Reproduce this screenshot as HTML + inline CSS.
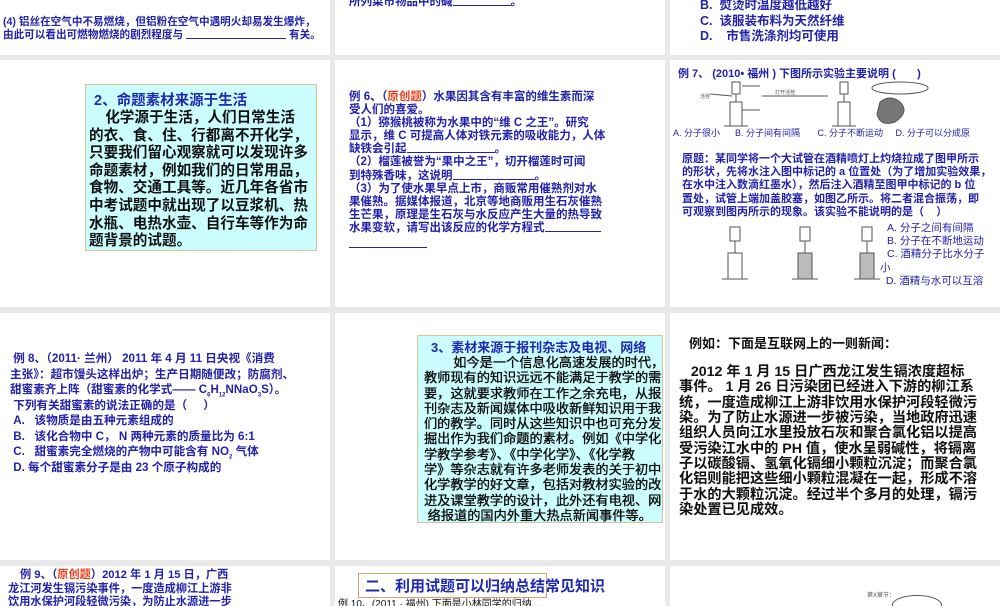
<!DOCTYPE html>
<html><head><meta charset="utf-8"><style>
*{margin:0;padding:0;box-sizing:border-box}
body{width:1000px;height:600px;background:#e9e9e9;position:relative;overflow:hidden;font-family:"Liberation Sans","Noto Sans CJK SC",sans-serif}
.s{position:absolute;background:#fff;overflow:hidden}
.t{position:absolute;white-space:nowrap;font-weight:bold}
.b{color:#2222aa}
.k{color:#111}
.r{color:#e8401c}
.u{display:inline-block;height:1px;background:#2222aa;vertical-align:-1px}
sub{line-height:0;font-size:6px}
</style></head><body>
<!-- row 1 -->
<div class="s" style="left:0;top:0;width:330px;height:55px">
 <div class="t" style="left:75px;top:-4px;font-size:6px;color:#888;font-weight:normal">A&nbsp;&nbsp;&nbsp;&nbsp;&nbsp;&nbsp;&nbsp;&nbsp;&nbsp;&nbsp;&nbsp;&nbsp;&nbsp;&nbsp;&nbsp;&nbsp;&nbsp;B&nbsp;&nbsp;&nbsp;&nbsp;&nbsp;&nbsp;&nbsp;&nbsp;&nbsp;&nbsp;&nbsp;&nbsp;&nbsp;&nbsp;&nbsp;&nbsp;&nbsp;C&nbsp;&nbsp;&nbsp;&nbsp;&nbsp;&nbsp;&nbsp;&nbsp;&nbsp;&nbsp;&nbsp;&nbsp;&nbsp;&nbsp;&nbsp;&nbsp;&nbsp;D</div>
 <div class="t b" style="left:3px;top:16px;font-size:10.6px;line-height:13px">(4) 铝丝在空气中不易燃烧，但铝粉在空气中遇明火却易发生爆炸，<br>由此可以看出可燃物燃烧的剧烈程度与 <span class="u" style="width:100px"></span> 有关。</div>
</div>
<div class="s" style="left:335px;top:0;width:330px;height:55px">
 <div class="t b" style="left:14px;top:-7px;font-size:11.5px">所列菜市物品中的碱<span class="u" style="width:58px"></span>。</div>
</div>
<div class="s" style="left:670px;top:0;width:330px;height:55px">
 <div class="t b" style="left:30px;top:-2px;font-size:12.5px;line-height:15.5px">B.&nbsp; 熨烫时温度越低越好<br>C.&nbsp; 该服装布料为天然纤维<br>D.&nbsp;&nbsp;&nbsp; 市售洗涤剂均可使用</div>
</div>
<!-- row 2 -->
<div class="s" style="left:0;top:60px;width:330px;height:247px">
 <div style="position:absolute;left:85px;top:24px;width:232px;height:167px;background:#ccfdfe;border:1px solid #d8c49a"></div>
 <div class="t" style="left:94px;top:29px;font-size:14.5px;color:#1f2ab0">2、命题素材来源于生活</div>
 <div class="t k" style="left:89px;top:50px;font-size:14.6px;line-height:17.6px">&nbsp;&nbsp;&nbsp;&nbsp;化学源于生活，人们日常生活<br>的衣、食、住、行都离不开化学，<br>只要我们留心观察就可以发现许多<br>命题素材，例如我们的日常用品，<br>食物、交通工具等。近几年各省市<br>中考试题中就出现了以豆浆机、热<br>水瓶、电热水壶、自行车等作为命<br>题背景的试题。</div>
</div>
<div class="s" style="left:335px;top:60px;width:330px;height:247px">
 <div class="t b" style="left:14px;top:31px;font-size:11.5px;line-height:13.1px">例 6、（<span class="r">原创题</span>）水果因其含有丰富的维生素而深<br>受人们的喜爱。<br>（1）猕猴桃被称为水果中的“维 C 之王”。研究<br>显示，维 C 可提高人体对铁元素的吸收能力，人体<br>缺铁会引起<span class="u" style="width:88px"></span>。<br>（2）榴莲被誉为“果中之王”，切开榴莲时可闻<br>到特殊香味，这说明<span class="u" style="width:82px"></span>。<br>（3）为了使水果早点上市，商贩常用催熟剂对水<br>果催熟。据媒体报道，北京等地商贩用生石灰催熟<br>生芒果，原理是生石灰与水反应产生大量的热导致<br>水果变软，请写出该反应的化学方程式<span class="u" style="width:56px"></span></div>
 <div style="position:absolute;left:14px;top:187px;width:78px;height:1px;background:#2222aa"></div>
</div>
<div class="s" style="left:670px;top:60px;width:330px;height:247px">
 <div class="t b" style="left:8px;top:5px;font-size:11px">例 7、 (2010• 福州 ) 下图所示实验主要说明 (&nbsp;&nbsp;&nbsp;&nbsp;&nbsp;&nbsp; )</div>
 <svg style="position:absolute;left:30px;top:20px" width="240" height="50" viewBox="0 0 240 50" fill="none" stroke="#555" stroke-width="1">
  <rect x="32" y="2" width="8" height="12"/><rect x="30" y="22" width="12" height="24"/><line x1="36" y1="14" x2="36" y2="22"/><line x1="24" y1="46" x2="48" y2="46"/>
  <rect x="140" y="2" width="8" height="12"/><rect x="138" y="22" width="12" height="24"/><line x1="144" y1="14" x2="144" y2="22"/><line x1="132" y1="46" x2="156" y2="46"/>
  <line x1="62" y1="16" x2="128" y2="16"/><line x1="10" y1="14" x2="32" y2="16"/><line x1="42" y1="6" x2="60" y2="6"/><line x1="42" y1="30" x2="60" y2="30"/>
  <ellipse cx="200" cy="8" rx="28" ry="6"/><path d="M180 22 q10 -8 20 0 q10 10 -5 20 q-15 5 -18 -8z" fill="#777"/>
  <text x="0" y="18" font-size="5" fill="#555" stroke="none">活栓</text><text x="75" y="14" font-size="5" fill="#555" stroke="none">打开活栓</text>
 </svg>
 <div class="t b" style="left:3px;top:66px;font-size:9px;font-weight:normal">A. 分子很小&nbsp;&nbsp;&nbsp;&nbsp;&nbsp; B. 分子间有间隔&nbsp;&nbsp;&nbsp;&nbsp;&nbsp;&nbsp; C. 分子不断运动&nbsp;&nbsp;&nbsp;&nbsp; D. 分子可以分成原</div>
 <div class="t b" style="left:12px;top:93px;font-size:11px;line-height:13.2px">原题：某同学将一个大试管在酒精喷灯上灼烧拉成了图甲所示<br>的形状，先将水注入图中标记的 a 位置处（为了增加实验效果，<br>在水中注入数滴红墨水），然后注入酒精至图甲中标记的 b 位<br>置处，试管上端加盖胶塞，如图乙所示。将二者混合振荡，即<br>可观察到图丙所示的现象。该实验不能说明的是（&nbsp;&nbsp;&nbsp; ）</div>
 <svg style="position:absolute;left:40px;top:165px" width="180" height="60" viewBox="0 0 180 60" fill="none" stroke="#555">
  <rect x="20" y="2" width="10" height="14"/><rect x="18" y="28" width="14" height="26"/><line x1="25" y1="16" x2="25" y2="28"/><line x1="12" y1="54" x2="38" y2="54"/>
  <rect x="90" y="2" width="10" height="14"/><rect x="88" y="28" width="14" height="26" fill="#bbb"/><line x1="95" y1="16" x2="95" y2="28"/><line x1="82" y1="54" x2="108" y2="54"/>
  <rect x="152" y="2" width="10" height="14"/><rect x="150" y="28" width="14" height="26" fill="#bbb"/><line x1="157" y1="16" x2="157" y2="28"/><line x1="144" y1="54" x2="170" y2="54"/>
 </svg>
 <div class="t b" style="left:217px;top:162px;font-size:10.5px;line-height:13.2px;font-weight:normal">A. 分子之间有间隔<br>B. 分子在不断地运动<br>C. 酒精分子比水分子</div>
 <div class="t b" style="left:210px;top:202px;font-size:10.5px;line-height:13.2px;font-weight:normal">小<br>&nbsp;&nbsp;D. 酒精与水可以互溶</div>
</div>
<!-- row 3 -->
<div class="s" style="left:0;top:313px;width:330px;height:247px">
 <div class="t b" style="left:10px;top:38px;font-size:11.6px;line-height:15.5px">&nbsp;例 8、（2011· 兰州） 2011 年 4 月 11 日央视《消费<br>主张》：超市馒头这样出炉；生产日期随便改；防腐剂、<br>甜蜜素齐上阵（甜蜜素的化学式—— C<sub>6</sub>H<sub>12</sub>NNaO<sub>3</sub>S）。<br>&nbsp;下列有关甜蜜素的说法正确的是（&nbsp;&nbsp;&nbsp;&nbsp; ）<br>&nbsp;A.&nbsp;&nbsp; 该物质是由五种元素组成的<br>&nbsp;B.&nbsp;&nbsp; 该化合物中 C， N 两种元素的质量比为 6:1<br>&nbsp;C.&nbsp;&nbsp; 甜蜜素完全燃烧的产物中可能含有 NO<sub>2</sub> 气体<br>&nbsp;D. 每个甜蜜素分子是由 23 个原子构成的</div>
</div>
<div class="s" style="left:335px;top:313px;width:330px;height:247px">
 <div style="position:absolute;left:82px;top:22px;width:246px;height:188px;background:#ccfdfe;border:1px solid #d8c49a"></div>
 <div class="t" style="left:96px;top:24px;font-size:13px;color:#1f2ab0">3、素材来源于报刊杂志及电视、网络</div>
 <div class="t k" style="left:89px;top:42px;font-size:13.2px;line-height:15.3px;font-weight:normal;text-shadow:0 0 0.6px #000,0 0 0.3px #000">&nbsp;&nbsp;&nbsp;&nbsp;&nbsp;&nbsp;&nbsp;&nbsp;如今是一个信息化高速发展的时代，<br>教师现有的知识远远不能满足于教学的需<br>要，这就要求教师在工作之余充电，从报<br>刊杂志及新闻媒体中吸收新鲜知识用于我<br>们的教学。同时从这些知识中也可充分发<br>掘出作为我们命题的素材。例如《中学化<br>学教学参考》、《中学化学》、《化学教<br>学》等杂志就有许多老师发表的关于初中<br>化学教学的好文章，包括对教材实验的改<br>进及课堂教学的设计，此外还有电视、网<br>&nbsp;络报道的国内外重大热点新闻事件等。</div>
</div>
<div class="s" style="left:670px;top:313px;width:330px;height:247px">
 <div class="t k" style="left:19px;top:20px;font-size:13px">例如：下面是互联网上的一则新闻：</div>
 <div class="t k" style="left:9px;top:52px;font-size:14.2px;line-height:15.35px">&nbsp;&nbsp;&nbsp;2012 年 1 月 15 日广西龙江发生镉浓度超标<br>事件。 1 月 26 日污染团已经进入下游的柳江系<br>统，一度造成柳江上游非饮用水保护河段轻微污<br>染。为了防止水源进一步被污染，当地政府迅速<br>组织人员向江水里投放石灰和聚合氯化铝以提高<br>受污染江水中的 PH 值，使水呈弱碱性，将镉离<br>子以碳酸镉、氢氧化镉细小颗粒沉淀；而聚合氯<br>化铝则能把这些细小颗粒混凝在一起，形成不溶<br>于水的大颗粒沉淀。经过半个多月的处理，镉污<br>染处置已见成效。</div>
</div>
<!-- row 4 -->
<div class="s" style="left:0;top:566px;width:330px;height:40px">
 <div class="t b" style="left:20px;top:3px;font-size:11.2px;line-height:13.5px">例 9、（<span class="r">原创题</span>）2012 年 1 月 15 日，广西<br><span style="margin-left:-12px">龙江河发生镉污染事件，一度造成柳江上游非</span><br><span style="margin-left:-12px">饮用水保护河段轻微污染，为防止水源进一步</span></div>
</div>
<div class="s" style="left:335px;top:566px;width:330px;height:40px">
 <div style="position:absolute;left:23px;top:7px;width:189px;height:25px;border:1px solid #d9a070;background:#fff"></div>
 <div class="t" style="left:30px;top:9px;font-size:15px;color:#1f2ab0">二、利用试题可以归纳总结常见知识</div>
 <div class="t k" style="left:3px;top:29px;font-size:10px;font-weight:normal">例 10、(2011 · 福州) 下面是小林同学的归纳…</div>
</div>
<div class="s" style="left:670px;top:566px;width:330px;height:40px">
 <div class="t" style="left:197px;top:24px;font-size:6px;color:#555;font-weight:normal">第X章节：</div>
 <div style="position:absolute;left:222px;top:29px;width:50px;height:20px;border:1px solid #555;border-radius:50%"></div>
</div>
</body></html>
